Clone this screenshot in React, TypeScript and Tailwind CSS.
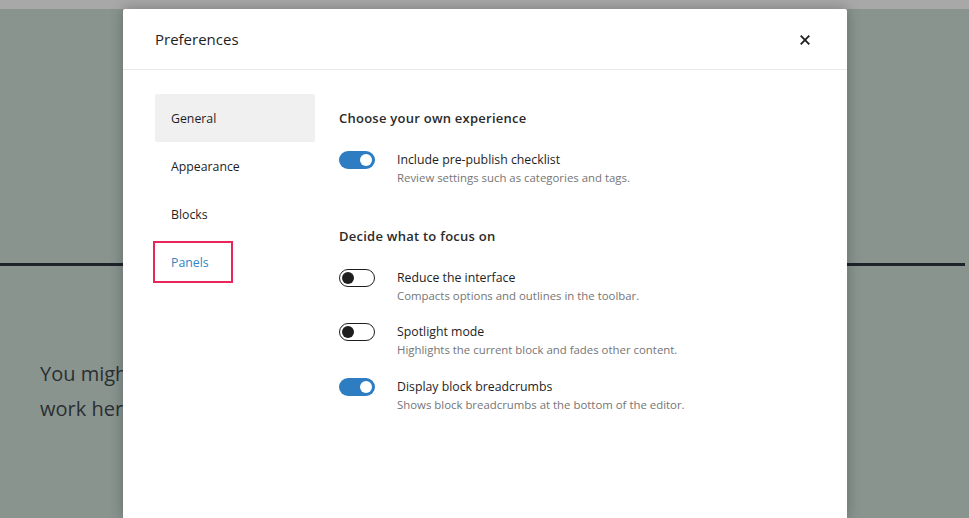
import { useState } from 'react'

// ── Menu lateral do diálogo ─────────────────────────────────────────────────
const TABS = ['General', 'Appearance', 'Blocks', 'Panels']

type ToggleProps = { on: boolean }

function Toggle({ on }: ToggleProps) {
  return on ? (
    <span className="shrink-0 w-[36px] h-[18px] rounded-full bg-[#2e7dc2] flex items-center justify-end pr-[3px]">
      <span className="w-[12px] h-[12px] rounded-full bg-white" />
    </span>
  ) : (
    <span className="shrink-0 w-[36px] h-[18px] rounded-full border border-[#1e1e1e] bg-white flex items-center pl-[2px]">
      <span className="w-[12px] h-[12px] rounded-full bg-[#1e1e1e]" />
    </span>
  )
}

function Option({ on, label, help, className }: { on: boolean; label: string; help: string; className?: string }) {
  return (
    <div className={'flex items-start gap-[22px] ' + (className ?? '')}>
      <Toggle on={on} />
      <div>
        <div className="text-[12.3px] leading-[18px] text-[#1e1e1e]">{label}</div>
        <div className="mt-[1px] text-[11.4px] leading-[16px] text-[#757575]">{help}</div>
      </div>
    </div>
  )
}

export default function App() {
  const [tab] = useState('General')

  return (
    <div
      className="relative w-[969px] h-[518px] overflow-hidden bg-[#89948f]"
      style={{ fontFamily: '"Open Sans", "Noto Sans", sans-serif' }}
    >
      {/* ── Editor por trás do modal ───────────────────────────────────── */}
      <div className="h-[9px] bg-[#a8a8a8]" />
      <div className="mt-[254px] h-[3px] w-[965px] bg-[#1e2329]" />
      <div className="mt-[90px] ml-[40px] w-[83px] overflow-hidden whitespace-nowrap text-[20px] leading-[35px] text-[#2a2f33]">
        <div>You might want</div>
        <div>work here so</div>
      </div>

      {/* ── Modal ──────────────────────────────────────────────────────── */}
      <div className="absolute left-[123px] top-[9px] bottom-0 w-[724px] bg-white rounded-t-[2px] shadow-[0_0_14px_rgba(0,0,0,0.28)] flex flex-col">
        <div className="h-[61px] shrink-0 border-b border-[#e9e9e9] flex items-center justify-between pl-[32px] pr-[32px] pt-[1px]">
          <h1 className="text-[15px] text-[#1e1e1e]">Preferences</h1>
          <button className="w-[20px] h-[20px] flex items-center justify-center text-[#1e1e1e]">
            <svg width="10" height="10" viewBox="0 0 10 10" fill="none" stroke="currentColor" strokeWidth="1.8">
              <path d="M0.7 0.7 L9.3 9.3 M9.3 0.7 L0.7 9.3" />
            </svg>
          </button>
        </div>

        <div className="flex gap-[24px] pl-[32px] pt-[24px]">
          <nav className="w-[160px] shrink-0">
            {TABS.map((t) => (
              <div
                key={t}
                className={
                  'relative h-[48px] flex items-center pl-[16px] pt-[3px] text-[12.3px] rounded-[2px] ' +
                  (t === tab ? 'bg-[#f0f0f0] text-[#1e1e1e]' : t === 'Panels' ? 'text-[#2f86c6]' : 'text-[#1e1e1e]')
                }
              >
                {t}
                {t === 'Panels' && (
                  <span className="absolute -left-[2px] top-[3px] w-[80px] h-[42px] border-2 border-[#e8265a]" />
                )}
              </div>
            ))}
          </nav>

          <section className="pt-[15px]">
            <h2 className="text-[13px] leading-[18px] font-semibold tracking-[0.25px] text-[#2a2a2a]">Choose your own experience</h2>
            <Option
              className="mt-[24px]"
              on
              label="Include pre-publish checklist"
              help="Review settings such as categories and tags."
            />

            <h2 className="mt-[41px] text-[13px] leading-[18px] font-semibold tracking-[0.25px] text-[#2a2a2a]">Decide what to focus on</h2>
            <Option
              className="mt-[24px]"
              on={false}
              label="Reduce the interface"
              help="Compacts options and outlines in the toolbar."
            />
            <Option
              className="mt-[19px]"
              on={false}
              label="Spotlight mode"
              help="Highlights the current block and fades other content."
            />
            <Option
              className="mt-[20px]"
              on
              label="Display block breadcrumbs"
              help="Shows block breadcrumbs at the bottom of the editor."
            />
          </section>
        </div>
      </div>
    </div>
  )
}
